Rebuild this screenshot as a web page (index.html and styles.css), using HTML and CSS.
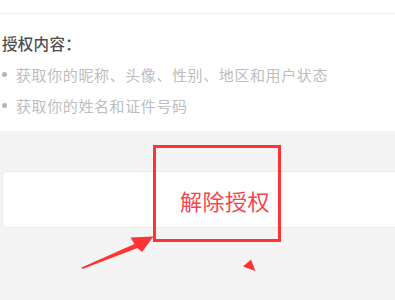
FILE: index.html
```html
<!DOCTYPE html>
<html lang="zh-CN">
<head>
<meta charset="utf-8">
<link rel="stylesheet" href="styles.css">
</head>
<body>
<div class="page">
  <div class="top"></div>
  <div class="info">
    <div class="title">授权内容：</div>
    <ul class="list">
      <li>获取你的昵称、头像、性别、地区和用户状态</li>
      <li>获取你的姓名和证件号码</li>
    </ul>
  </div>
  <div class="gray">
    <div class="card">
      <span class="revoke">解除授权</span>
    </div>
  </div>
  <div class="mark-box"></div>
  <svg class="mark-arrow" width="395" height="300" viewBox="0 0 395 300">
    <polygon points="81.5,267.5 134.5,244 130.5,237.5 153.5,236.5 142,252 137.5,248 82.5,269" fill="#ff3333"/>
    <polygon points="243,266.5 251,259.5 255.5,271" fill="#ff3333"/>
  </svg>
</div>
</body>
</html>
```

FILE: styles.css
```css
html, body {
  margin: 0;
  padding: 0;
  background: #ffffff;
}
.page {
  position: relative;
  width: 395px;
  height: 300px;
  overflow: hidden;
  font-family: "Noto Sans CJK SC", "Noto Sans", sans-serif;
}
.top {
  height: 13px;
  border-bottom: 1px solid #f1f1f1;
}
.info {
  padding: 14px 0 10px 2px;
}
.title {
  height: 31px;
  line-height: 31px;
  font-size: 15.5px;
  color: #4e4e4e;
  font-weight: 500;
  letter-spacing: 0.3px;
}
.list {
  list-style: none;
  margin: 0;
  padding: 0;
}
.list li {
  display: flex;
  align-items: center;
  height: 31px;
  font-size: 15px;
  letter-spacing: 0.6px;
  color: #bdbdbd;
}
.list li::before {
  content: "";
  width: 5px;
  height: 5px;
  border-radius: 50%;
  background: #b5b5b5;
  margin-right: 9px;
  flex: none;
}
.gray {
  background: #f4f4f4;
  height: 169px;
  padding-top: 40px;
  box-sizing: border-box;
}
.card {
  margin-left: 2px;
  width: 410px;
  height: 57px;
  box-sizing: border-box;
  background: #ffffff;
  border: 1px solid #ebebeb;
  border-radius: 5px;
  display: flex;
  align-items: center;
  padding-left: 177px;
}
.revoke {
  font-size: 22px;
  color: #f4454e;
  letter-spacing: 0.5px;
}
.mark-box {
  position: absolute;
  left: 153px;
  top: 145px;
  width: 122px;
  height: 91px;
  border: 3px solid #ff3333;
}
.mark-arrow {
  position: absolute;
  left: 0;
  top: 0;
}
```
